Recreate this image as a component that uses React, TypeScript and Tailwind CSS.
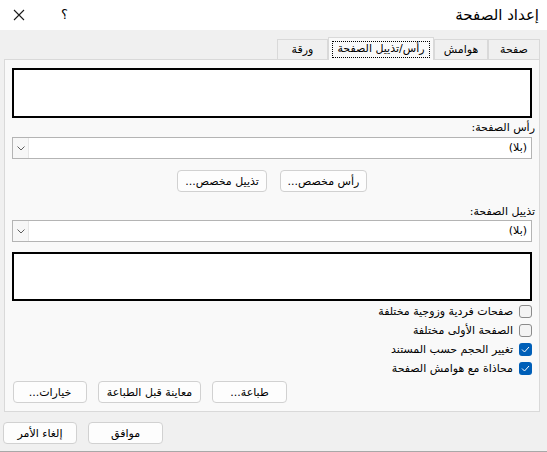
import type { ReactNode } from 'react';

function Btn({ children, className = '' }: { children: ReactNode; className?: string }) {
  return (
    <button
      className={`flex h-[22px] items-center justify-center rounded-[4px] border border-[#d1d1d1] bg-[#fdfdfd] text-[11px] leading-none text-black ${className}`}
    >
      {children}
    </button>
  );
}

function Select() {
  return (
    <div className="flex h-[22px] items-stretch border border-[#b4b4b4] bg-white">
      <span className="flex flex-1 items-center pr-[4px] text-[11px]">(بلا)</span>
      <span className="flex w-[16px] items-center justify-center border-r border-[#e6e6e6] bg-[#f7f7f7]">
        <svg width="8" height="5" viewBox="0 0 8 5" fill="none">
          <path d="M0.5 0.5 L4 4 L7.5 0.5" stroke="#5f5f5f" strokeWidth="1" />
        </svg>
      </span>
    </div>
  );
}

function Check({ checked, label }: { checked?: boolean; label: string }) {
  return (
    <div className="flex h-[19px] items-center gap-[6px]">
      {checked ? (
        <span className="flex h-[13px] w-[13px] items-center justify-center rounded-[3px] bg-[#005fb8]">
          <svg width="9" height="7" viewBox="0 0 9 7" fill="none">
            <path d="M1 3.5 L3.5 6 L8 1" stroke="white" strokeWidth="1" />
          </svg>
        </span>
      ) : (
        <span className="h-[13px] w-[13px] rounded-[3px] border border-[#8b8b8b] bg-[#f4f4f4]" />
      )}
      <span className="text-[11px] leading-none">{label}</span>
    </div>
  );
}

export default function App() {
  const tabs = [
    { label: 'صفحة', w: 'w-[52px]' },
    { label: 'هوامش', w: 'w-[54px]' },
    { label: 'رأس/تذييل الصفحة', w: 'w-[106px]', active: true },
    { label: 'ورقة', w: 'w-[51px]' },
  ];

  return (
    <div
      dir="rtl"
      className="flex h-[452px] w-[547px] flex-col overflow-hidden border-b border-[#a8a8a8] bg-[#f0f0f0] font-['DejaVu_Sans',sans-serif] text-black"
    >
      {/* Title bar */}
      <div className="flex h-[30px] shrink-0 items-center justify-between bg-white pr-[8px] pl-[13px]">
        <span className="text-[15px]">إعداد الصفحة</span>
        <div className="flex items-center gap-[36px]">
          <span className="text-[13px]">؟</span>
          <svg width="12" height="12" viewBox="0 0 12 12" fill="none">
            <path d="M1 1 L11 11 M11 1 L1 11" stroke="#1a1a1a" strokeWidth="1.1" />
          </svg>
        </div>
      </div>

      <div className="pr-[7px] pl-[4px]">
        {/* Tabs */}
        <div className="mt-[7px] flex h-[22px] items-end">
          {tabs.map((t) =>
            t.active ? (
              <div
                key={t.label}
                className={`relative z-10 -mb-px flex h-[23px] items-center justify-center border border-b-0 border-[#d9d9d9] bg-[#f9f9f9] ${t.w}`}
              >
                <span className="border border-dotted border-black px-[4px] pb-[1px] text-[11px] leading-[14px]">
                  {t.label}
                </span>
              </div>
            ) : (
              <div
                key={t.label}
                className={`flex h-[20px] items-center justify-center border border-b-0 border-[#d9d9d9] bg-[#f0f0f0] pt-[2px] text-[11px] ${t.w}`}
              >
                {t.label}
              </div>
            ),
          )}
        </div>

        {/* Panel */}
        <div className="flex h-[353px] w-[536px] flex-col border border-[#d9d9d9] bg-[#f9f9f9] px-[7px] pt-[8px]">
          <div className="h-[50px] border-2 border-black bg-white" />

          <div className="-mr-[3px] mt-[2px] flex h-[16px] items-center text-[11px]">رأس الصفحة:</div>
          <div className="mt-[1px]">
            <Select />
          </div>

          <div className="mt-[11px] flex justify-center gap-[13px]">
            <Btn className="w-[87px]">رأس مخصص...</Btn>
            <Btn className="w-[90px]">تذييل مخصص...</Btn>
          </div>

          <div className="-mr-[3px] mt-[12px] flex h-[16px] items-center text-[11px]">تذييل الصفحة:</div>
          <div>
            <Select />
          </div>

          <div className="mt-[10px] h-[49px] border-2 border-black bg-white" />

          <div className="mt-[1px] flex flex-col">
            <Check label="صفحات فردية وزوجية مختلفة" />
            <Check label="الصفحة الأولى مختلفة" />
            <Check checked label="تغيير الحجم حسب المستند" />
            <Check checked label="محاذاة مع هوامش الصفحة" />
          </div>

          <div className="mt-[3px] flex justify-end gap-[11px]">
            <Btn className="w-[75px]">طباعة...</Btn>
            <Btn className="w-[103px]">معاينة قبل الطباعة</Btn>
            <Btn className="ml-px w-[74px]">خيارات...</Btn>
          </div>
        </div>
      </div>

      {/* Dialog buttons */}
      <div className="mt-[10px] flex justify-end gap-[11px] pl-[3px]">
        <Btn className="h-[21px] w-[75px] border-[#005fb8]">موافق</Btn>
        <Btn className="h-[21px] w-[74px]">إلغاء الأمر</Btn>
      </div>
    </div>
  );
}
